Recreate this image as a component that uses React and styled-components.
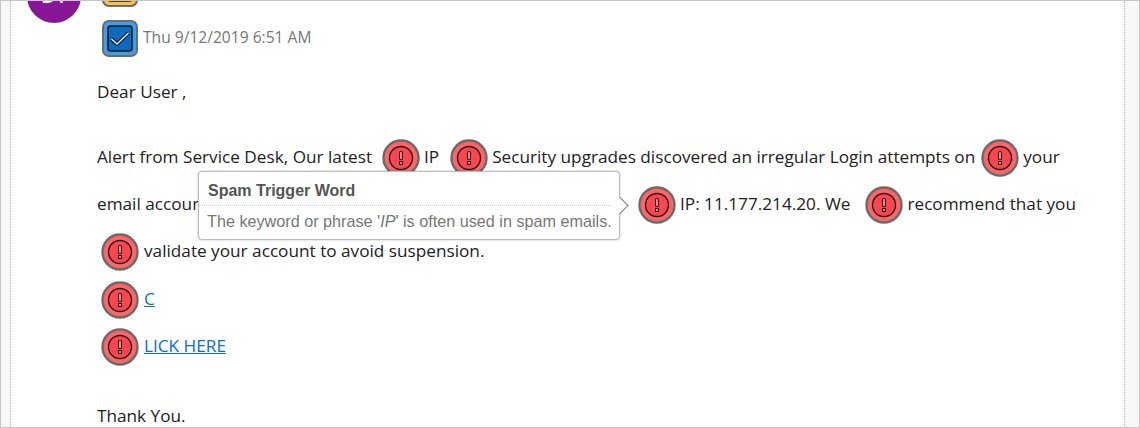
import React from 'react'
import styled, { createGlobalStyle } from 'styled-components'

const GlobalStyle = createGlobalStyle`
    html, body {
        margin: 0;
        padding: 0;
        background: #fff;
    }
`

const Frame = styled.div`
    width: 1140px;
    height: 428px;
    box-sizing: border-box;
    display: flex;
    overflow: hidden;
    border: 1px solid #c6c6c6;
    background: #fff;
    font-family: "Open Sans", "Noto Sans", sans-serif;
    font-size: 17.2px;
    color: #222;
`

const Gutter = styled.div`
    flex: none;
    width: ${p => p.$width}px;
    background: #f8f7f6;
    border-${p => p.$side}: 1px dotted #b4b4b4;
`

const Main = styled.div`
    flex: 1;
    min-width: 0;
    padding-left: 16px;
`

const Header = styled.div`
    display: flex;
    align-items: flex-start;
    height: 55px;
`

const Avatar = styled.div`
    flex: none;
    width: 54px;
    height: 54px;
    margin-top: -32px;
    border-radius: 50%;
    background: #881798;
    color: #fff;
    font-size: 20px;
    font-weight: 600;
    line-height: 54px;
    text-align: center;
`

const HeaderCol = styled.div`
    flex: 1;
    margin-left: 21px;
    margin-top: -31px;
    display: flex;
    flex-direction: column;
    gap: 13px;
`

const FlagRow = styled.div`
    display: flex;
    align-items: center;
    gap: 5px;
`

const Recipients = styled.div`
    position: absolute;
    top: -24px;
    left: 930px;
    display: flex;
    color: #0078d4;
    line-height: 24px;
`

const Recipient = styled.span`
    margin-right: ${p => p.$gap || 0}px;
`

const DateText = styled.span`
    margin-top: -4px;
    font-size: 15.6px;
    color: #777;
`

const Body = styled.div`
    padding-left: 70px;
`

const Greeting = styled.div`
    height: 24px;
    line-height: 24px;
    margin-top: 24px;
    margin-bottom: 29px;
`

const Line = styled.div`
    height: 47.2px;
    display: flex;
    align-items: center;
    white-space: pre;
    margin-left: ${p => p.$indent || 0}px;
`

const Masked = styled.span`
    flex: none;
    width: ${p => p.$width}px;
    overflow: hidden;
`

const Gap = styled.span`
    flex: none;
    width: ${p => p.$width}px;
`

const Link = styled.a`
    color: #0f6cc8;
    text-decoration: underline;
    margin-left: 5px;
`

const Closing = styled.div`
    margin-top: 35px;
    line-height: 24px;
`

const Tooltip = styled.div`
    position: absolute;
    left: 198px;
    top: 171px;
    width: 422px;
    height: 69px;
    box-sizing: border-box;
    background: #fff;
    border: 1px solid #bcbcbc;
    border-radius: 4px;
    box-shadow: 0 0 2px rgba(0, 0, 0, 0.3);
    font-family: "Liberation Sans", Arial, sans-serif;
    color: #777;

    &::after {
        content: "";
        position: absolute;
        right: -7px;
        top: 27px;
        width: 12px;
        height: 12px;
        background: #fff;
        border-top: 1px solid #808080;
        border-right: 1px solid #808080;
        transform: rotate(45deg);
    }
`

const TooltipTitle = styled.div`
    height: 34px;
    box-sizing: border-box;
    padding: 11px 9px 0;
    border-bottom: 1px dotted #d0d0d0;
    font-size: 16px;
    font-weight: 700;
    line-height: 16px;
    color: #555;
`

const TooltipText = styled.div`
    padding: 6px 8px 0;
    font-size: 16.2px;
    line-height: 18px;
    white-space: nowrap;
`

const AlertSvg = styled.svg`
    flex: none;
    margin-top: 3px;
`

const FlagSvg = styled.svg`
    flex: none;
`

const AlertIcon = () => (
    <AlertSvg width="38" height="38" viewBox="0 0 38 38">
        <circle cx="19" cy="19" r="17.5" fill="#ff6468" stroke="#6b6b6b" strokeWidth="2.4" />
        <circle cx="19" cy="19" r="11.5" fill="#ff4650" stroke="#1c1c1c" strokeWidth="1.4" />
        <rect x="17.5" y="12.5" width="3" height="8" rx="1" fill="#ff8a8a" stroke="#222" strokeWidth="1.1" />
        <rect x="17.5" y="22.5" width="3" height="3" fill="#ff8a8a" stroke="#222" strokeWidth="1.1" />
    </AlertSvg>
)

const FlagIcon = ({ outer, inner }) => (
    <FlagSvg width="36" height="37" viewBox="0 0 36 37">
        <rect x="1" y="1" width="34" height="35" rx="6" fill={outer} stroke="#6b6b6b" strokeWidth="2" />
        <rect x="6" y="6" width="24" height="25" rx="2.5" fill={inner} stroke="#1a1a1a" strokeWidth="1.6" />
        <path d="M9.5 19 L15 24 L26.5 13" fill="none" stroke="#1a1a1a" strokeWidth="3.8" />
        <path d="M9.5 19 L15 24 L26.5 13" fill="none" stroke="#d8e8f5" strokeWidth="1.6" />
    </FlagSvg>
)

export default function App() {
    return (
        <Frame>
            <GlobalStyle />
            <Gutter $width={9} $side="right" />
            <Main>
                <Header>
                    <Avatar>DT</Avatar>
                    <HeaderCol>
                        <FlagRow>
                            <FlagIcon outer="#fdc13f" inner="#f8b82c" />
                            <Recipients>
                                <Recipient $gap={43}>y</Recipient>
                                <Recipient $gap={35}>y</Recipient>
                                <Recipient>y</Recipient>
                            </Recipients>
                        </FlagRow>
                        <FlagRow>
                            <FlagIcon outer="#3f9fee" inner="#0a6cc0" />
                            <DateText>Thu 9/12/2019 6:51 AM</DateText>
                        </FlagRow>
                    </HeaderCol>
                </Header>
                <Body>
                    <Greeting>Dear User ,</Greeting>
                    <Line>
                        Alert from Service Desk, Our latest
                        <Gap $width={10} /><AlertIcon /><Gap $width={4} />
                        IP
                        <Gap $width={11} /><AlertIcon /><Gap $width={4} />
                        Security upgrades discovered an irregular Login attempts on
                        <Gap $width={6} /><AlertIcon /><Gap $width={4} />
                        your
                    </Line>
                    <Line>
                        <Masked $width={541}>email account from an unknown device location</Masked>
                        <AlertIcon /><Gap $width={4} />
                        IP: 11.177.214.20. We
                        <Gap $width={15} /><AlertIcon /><Gap $width={4} />
                        recommend that you
                    </Line>
                    <Line $indent={4}>
                        <AlertIcon /><Gap $width={5} />
                        validate your account to avoid suspension.
                    </Line>
                    <Line $indent={4}>
                        <AlertIcon /><Link href="#">C</Link>
                    </Line>
                    <Line $indent={4}>
                        <AlertIcon /><Link href="#">LICK HERE</Link>
                    </Line>
                    <Closing>Thank You.</Closing>
                </Body>
            </Main>
            <Gutter $width={14} $side="left" />
            <Tooltip>
                <TooltipTitle>Spam Trigger Word</TooltipTitle>
                <TooltipText>The keyword or phrase '<em>IP</em>' is often used in spam emails.</TooltipText>
            </Tooltip>
        </Frame>
    )
}
